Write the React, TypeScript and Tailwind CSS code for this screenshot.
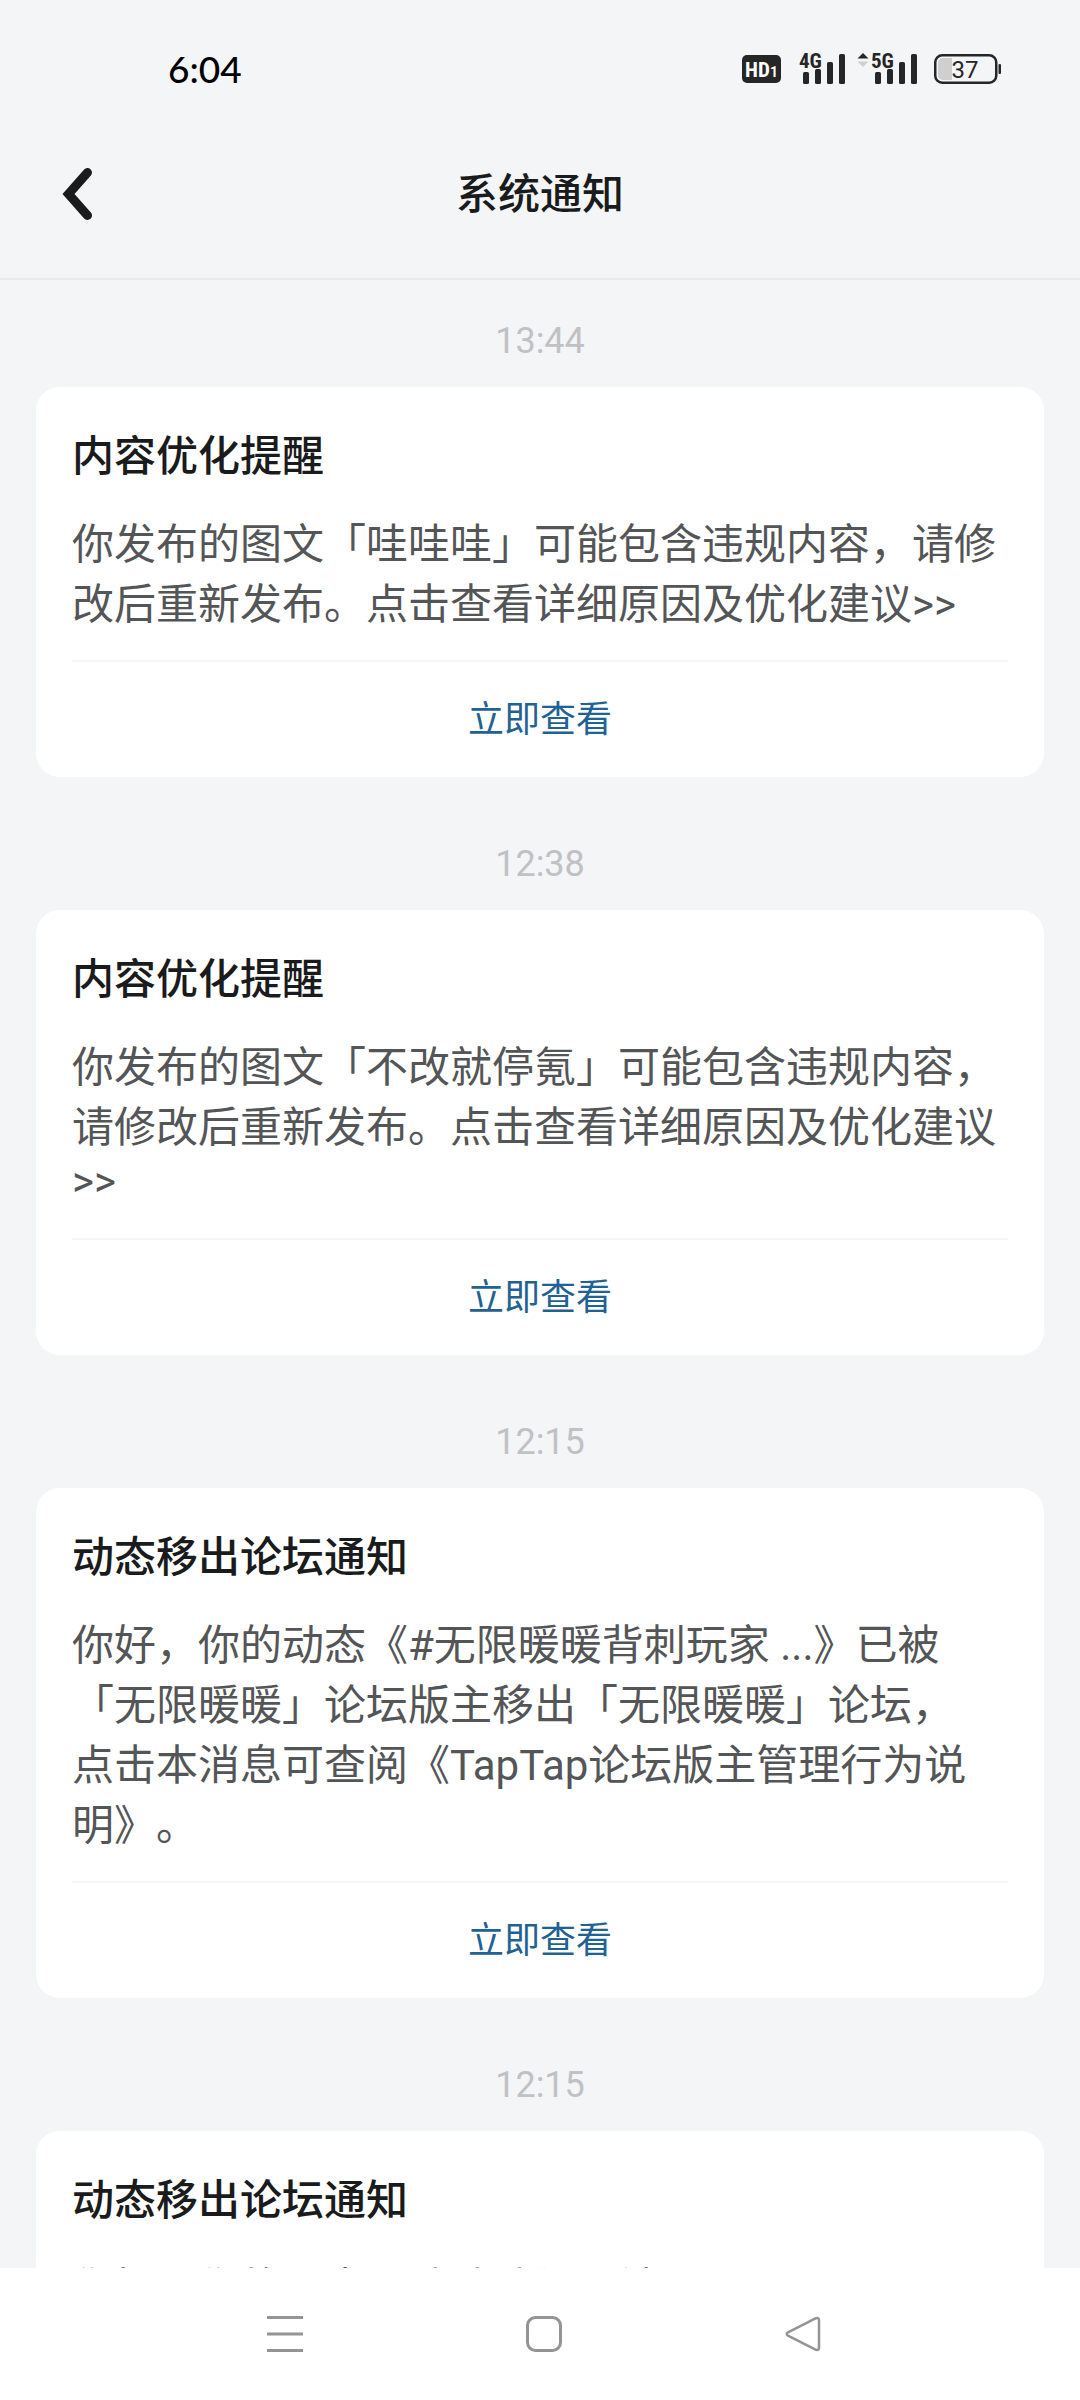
// App.tsx
import { useState } from 'react'

type Notice = {
  id: number
  time: string
  title: string
  body: string
  // trailing line without Chinese characters, set a little tighter
  tail?: string
}

const notices: Notice[] = [
  {
    id: 1,
    time: '13:44',
    title: '内容优化提醒',
    body: '你发布的图文「哇哇哇」可能包含违规内容，请修改后重新发布。点击查看详细原因及优化建议>>',
  },
  {
    id: 2,
    time: '12:38',
    title: '内容优化提醒',
    body: '你发布的图文「不改就停氪」可能包含违规内容，请修改后重新发布。点击查看详细原因及优化建议',
    tail: '>>',
  },
  {
    id: 3,
    time: '12:15',
    title: '动态移出论坛通知',
    body: '你好，你的动态《#无限暖暖背刺玩家 ...》已被「无限暖暖」论坛版主移出「无限暖暖」论坛，\n点击本消息可查阅《TapTap论坛版主管理行为说明》。',
  },
  {
    id: 4,
    time: '12:15',
    title: '动态移出论坛通知',
    body: '你好，你的动态《哇哇哇》已被\n「无限暖暖」论坛版主移出「无限暖暖」论坛，\n点击本消息可查阅《TapTap论坛版主管理行为说明》。',
  },
]

function Signal({ label }: { label: string }) {
  return (
    <svg className="w-[48px] h-[46px]" viewBox="0 -6 48 46" fill="#262626">
      <text x="0" y="16" fontSize="21" fontWeight="700" fontFamily="'Roboto Condensed', Roboto, sans-serif">
        {label}
      </text>
      <rect x="4" y="20" width="6" height="12" rx="1.5" />
      <rect x="16" y="17" width="6" height="15" rx="1.5" />
      <rect x="28" y="10" width="6" height="22" rx="1.5" />
      <rect x="40" y="2" width="6" height="30" rx="1.5" />
    </svg>
  )
}

function StatusBar() {
  return (
    <div className="h-[110px] pt-7 pl-[168px] pr-[78px] flex items-center justify-between shrink-0">
      <span className="font-[Lato] text-[37px] leading-[44px] font-medium text-black">6:04</span>

      <div className="flex items-center">
        {/* HD call badge */}
        <svg className="w-[39px] h-[28px] mr-[18px]" viewBox="0 0 39 28">
          <rect width="39" height="28" rx="5" fill="#262626" />
          <text x="3" y="22" fontSize="21" fontWeight="700" fill="#fff" fontFamily="'Roboto Condensed', Roboto, sans-serif">
            HD
          </text>
          <text x="28" y="22" fontSize="14" fontWeight="700" fill="#fff" fontFamily="Roboto, sans-serif">
            1
          </text>
        </svg>

        <Signal label="4G" />

        {/* Up / down traffic */}
        <svg className="w-[12px] h-[34px] ml-[10px] mr-[2px]" viewBox="0 0 12 34">
          <path d="M6 1l5.500 5.500H.5z" fill="#262626" />
          <path d="M6 15L.5 9.500h11z" fill="#cfcfcf" />
        </svg>
        <Signal label="5G" />

        {/* Battery */}
        <svg className="w-[68px] h-[30px] ml-[15px]" viewBox="0 0 68 30">
          <path d="M9 4h9v22H9a5 5 0 01-5-5V9a5 5 0 015-5z" fill="#cfcfcf" />
          <rect x="1.250" y="1.250" width="61" height="27.500" rx="7" fill="none" stroke="#262626" strokeWidth="2.500" />
          <rect x="64.500" y="10" width="2.500" height="10" rx="1" fill="#262626" />
          <text x="31" y="24" fontSize="24" textAnchor="middle" fill="#262626" fontFamily="Roboto, sans-serif">
            37
          </text>
        </svg>
      </div>
    </div>
  )
}

function Header() {
  return (
    <header className="h-[170px] px-[60px] flex items-center justify-between border-b-2 border-[#e8e9eb] shrink-0">
      <button type="button" aria-label="返回" className="w-9 h-[60px] flex items-center justify-center">
        <svg className="w-9 h-[54px]" viewBox="0 0 36 54" fill="none" stroke="#1a1b1c" strokeWidth="9" strokeLinecap="round" strokeLinejoin="miter">
          <path d="M27.500 5.500L8.500 27l19 21.500" />
        </svg>
      </button>
      <h1 className="pt-0.5 text-[42px] leading-[60px] font-medium text-[#1a1b1c]">系统通知</h1>
      <div className="w-9" />
    </header>
  )
}

function NoticeCard({ notice, onOpen }: { notice: Notice; onOpen: () => void }) {
  return (
    <li>
      <time className="block pt-10 pb-[25px] text-center text-[36px] leading-[42px] text-[#bfc1c4]">
        {notice.time}
      </time>
      <article className="bg-white rounded-3xl px-9 pt-10 mb-[26px]">
        <h2 className="text-[42px] leading-[60px] font-medium text-[#1a1b1c]">{notice.title}</h2>
        <p className="mt-7 text-[42px] leading-[60px] text-[#545557] whitespace-pre-line [text-spacing-trim:space-all]">
          {notice.body}
          {notice.tail && <span className="block pb-2 leading-[47px]">{notice.tail}</span>}
        </p>
        <button
          type="button"
          onClick={onOpen}
          className="w-full mt-[25px] h-[117px] border-t-2 border-[#f5f6f7] text-center text-[36px] leading-[54px] text-[#1f6293]"
        >
          立即查看
        </button>
      </article>
    </li>
  )
}

function NavBar() {
  return (
    <nav className="h-[132px] pl-39 pr-37 flex items-center bg-white shrink-0">
      <button type="button" aria-label="最近任务" className="flex-1 flex justify-center">
        <svg className="w-9 h-9" viewBox="0 0 36 36" stroke="#949494" strokeWidth="3">
          <path d="M0 1.500h36M0 18h36M0 34.500h36" />
        </svg>
      </button>
      <button type="button" aria-label="主屏幕" className="flex-1 flex justify-center">
        <svg className="w-9 h-9" viewBox="0 0 36 36" fill="none" stroke="#949494" strokeWidth="3">
          <rect x="1.500" y="1.500" width="33" height="33" rx="8" />
        </svg>
      </button>
      <button type="button" aria-label="返回上一页" className="flex-1 flex justify-center">
        <svg className="w-9 h-9" viewBox="0 0 36 36" fill="none" stroke="#949494" strokeWidth="2.500" strokeLinejoin="round">
          <path d="M31 2.200L3 16.400q-2.600 1.600 0 3.200L31 33.800q3 .8 3-2V4.200q0-2.800-3-2z" />
        </svg>
      </button>
    </nav>
  )
}

export default function App() {
  const [, setOpened] = useState<number | null>(null)

  return (
    <div className="h-screen flex flex-col bg-[#f4f5f7] font-[Roboto,'Noto_Sans_CJK_SC',sans-serif]" lang="zh-CN">
      <StatusBar />
      <Header />
      <main className="flex-1 min-h-0 overflow-hidden px-9">
        <ul>
          {notices.map((notice) => (
            <NoticeCard key={notice.id} notice={notice} onOpen={() => setOpened(notice.id)} />
          ))}
        </ul>
      </main>
      <NavBar />
    </div>
  )
}
